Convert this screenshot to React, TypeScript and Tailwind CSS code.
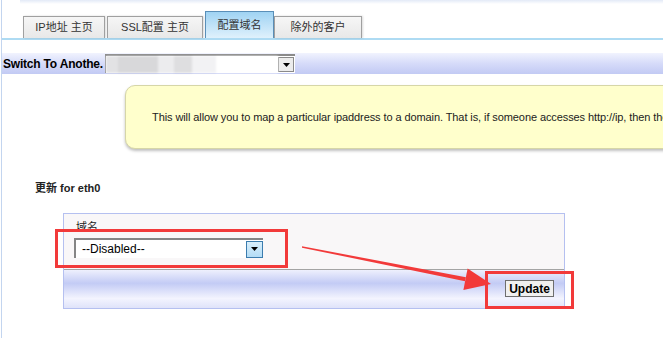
const TABS = [
  { label: 'IP地址 主页', width: 'w-[82px]' },
  { label: 'SSL配置 主页', width: 'w-[96px]' },
  { label: '配置域名', width: 'w-[69px]', active: true },
  { label: '除外的客户', width: 'w-[88px]' },
]

const FONT = "font-['Liberation_Sans','Noto_Sans_CJK_SC',sans-serif]"

function DropArrow() {
  return (
    <svg width="7" height="4" viewBox="0 0 7 4">
      <path d="M0 0h7L3.5 4z" fill="#000" />
    </svg>
  )
}

export default function App() {
  return (
    <div className={`relative w-[663px] h-[338px] overflow-hidden bg-white text-[#222] ${FONT}`}>
      {/* left page border */}
      <div className="absolute left-[1px] top-0 h-full w-px bg-[#c3d5ef]" />

      {/* faint shadow of the box above */}
      <div className="ml-[20px] h-[4px] bg-gradient-to-b from-[#e3eaf7] to-white" />

      {/* Tabs */}
      <div className="flex items-end pl-[23px] h-[34px]">
        {TABS.map((t) =>
          t.active ? (
            <div
              key={t.label}
              className={`${t.width} h-[27px] border border-b-0 border-[#5a8fb8] bg-gradient-to-b from-[#9fd3f3] to-[#dff1fc] flex items-center justify-center text-[11px] text-[#333]`}
            >
              {t.label}
            </div>
          ) : (
            <div
              key={t.label}
              className={`${t.width} h-[22px] mr-[2px] border border-b-0 border-[#a0a0a0] bg-gradient-to-b from-[#f6f6f6] to-[#e8e8e8] flex items-center justify-center text-[11px] text-[#333] shadow-[1px_0_2px_rgba(0,0,0,0.15)]`}
            >
              {t.label}
            </div>
          ),
        )}
      </div>
      <div className="h-[2px] ml-[2px] bg-[#aedbf3]" />

      {/* Switch bar */}
      <div className="mt-[13px] ml-[2px] h-[21px] flex items-center bg-gradient-to-b from-[#f1f3fe] via-[#d6dbf9] to-[#c2caf4]">
        <span className="pl-[1px] text-[12px] font-bold text-black tracking-[-0.2px] w-[103px] whitespace-nowrap overflow-hidden">
          Switch To Anothe.
        </span>
        <div className="relative h-[19px] w-[190px] border-t-2 border-l border-[#8a8a8a] bg-white flex items-center">
          <div className="flex-1 h-full flex blur-[1px]">
            <div className="w-[12px] bg-[#e2e2e4]" />
            <div className="w-[40px] bg-[#d8d8da]" />
            <div className="w-[16px] bg-[#ececee]" />
            <div className="w-[18px] bg-[#dedee0]" />
            <div className="w-[24px] bg-[#f2f2f4]" />
            <div className="flex-1 bg-white" />
          </div>
          <div className="mr-[1px] w-[16px] h-[15px] border border-[#8a8a8a] bg-[#ececec] flex items-center justify-center">
            <DropArrow />
          </div>
        </div>
      </div>

      {/* Info box */}
      <div className="mt-[11px] ml-[125px] w-[600px] h-[64px] rounded-[10px] border border-[#d6d6a8] bg-[#ffffcc] shadow-[0_2px_3px_rgba(0,0,0,0.25)] flex items-center pl-[26px]">
        <p className="text-[11px] tracking-[-0.09px] text-[#222] whitespace-nowrap">
          This will allow you to map a particular ipaddress to a domain. That is, if someone accesses http://ip, then the
          request goes to the domain you select.
        </p>
      </div>

      {/* Section heading */}
      <div className="mt-[31px] ml-[35px] text-[11px] leading-[16px] font-bold text-[#222]">更新 for eth0</div>

      {/* Form panel */}
      <div className="mt-[17px] ml-[63px] w-[502px] border border-[#b5c0f0]">
        <div className="h-[55px] bg-[#f9f7f8] pl-[10px] pt-[7px]">
          <div className="text-[11px] leading-[12px] text-[#222] pl-[2px]">域名</div>
          <div className="mt-[5px] w-[189px] h-[20px] border-t-2 border-l-2 border-[#858585] bg-white flex items-center">
            <span className="flex-1 pl-[6px] text-[12px] text-black">--Disabled--</span>
            <div className="w-[17px] h-[17px] border border-[#3b7cae] bg-gradient-to-b from-[#d9effc] to-[#b3dcf5] flex items-center justify-center">
              <DropArrow />
            </div>
          </div>
        </div>
        <div className="h-px bg-[#a4a4a4]" />
        <div className="h-[38px] flex items-start justify-end pr-[10px] pt-[10px] bg-[linear-gradient(to_bottom,#eef0fd_0%,#c3cbf5_35%,#f3f4fe_75%,#dfe3fa_100%)]">
          <button className="h-[17px] w-[49px] border border-[#6e6e6e] bg-[#f0f0f0] text-[12px] font-bold text-black leading-none">
            Update
          </button>
        </div>
      </div>

      {/* Annotations */}
      <div className="absolute left-[55px] top-[229px] w-[233px] h-[39px] border-[3px] border-[#f23a3a]" />
      <div className="absolute left-[485px] top-[271px] w-[89px] h-[38px] border-[3px] border-[#f23a3a]" />
      <svg className="absolute left-0 top-0" width="663" height="338" viewBox="0 0 663 338">
        <polygon points="302,246.3 302,247.7 465.1,281.2 465.9,277.2" fill="#f23a3a" />
        <polygon points="467.6,268.4 491,284 463.4,290" fill="#f23a3a" />
      </svg>
    </div>
  )
}
